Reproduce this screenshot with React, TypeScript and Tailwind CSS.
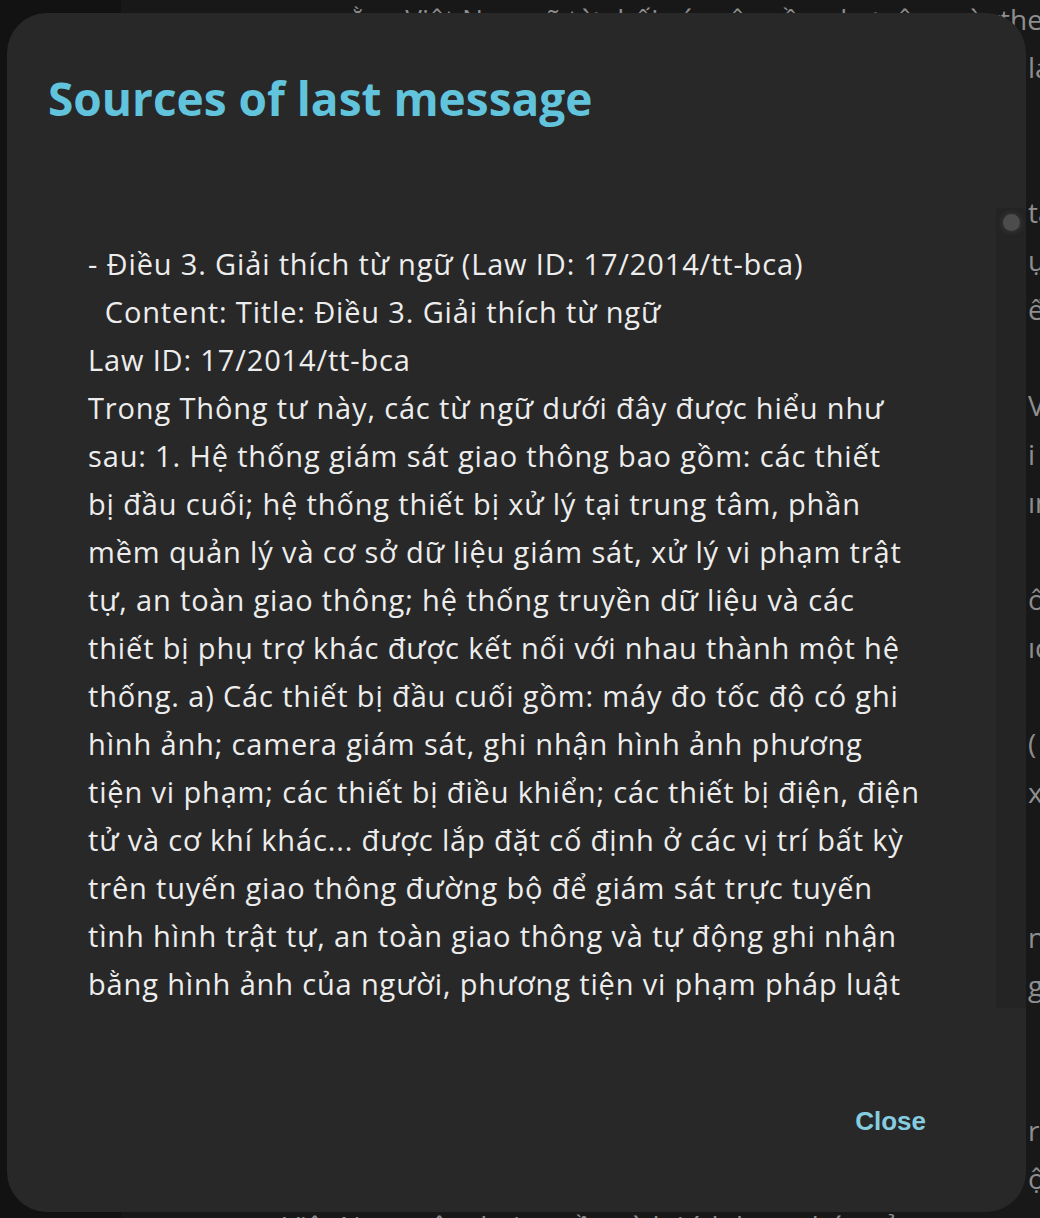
import React from "react";

const bodyLines = [
  "- Điều 3. Giải thích từ ngữ (Law ID: 17/2014/tt-bca)",
  "  Content: Title: Điều 3. Giải thích từ ngữ",
  "Law ID: 17/2014/tt-bca",
  "Trong Thông tư này, các từ ngữ dưới đây được hiểu như",
  "sau: 1. Hệ thống giám sát giao thông bao gồm: các thiết",
  "bị đầu cuối; hệ thống thiết bị xử lý tại trung tâm, phần",
  "mềm quản lý và cơ sở dữ liệu giám sát, xử lý vi phạm trật",
  "tự, an toàn giao thông; hệ thống truyền dữ liệu và các",
  "thiết bị phụ trợ khác được kết nối với nhau thành một hệ",
  "thống. a) Các thiết bị đầu cuối gồm: máy đo tốc độ có ghi",
  "hình ảnh; camera giám sát, ghi nhận hình ảnh phương",
  "tiện vi phạm; các thiết bị điều khiển; các thiết bị điện, điện",
  "tử và cơ khí khác... được lắp đặt cố định ở các vị trí bất kỳ",
  "trên tuyến giao thông đường bộ để giám sát trực tuyến",
  "tình hình trật tự, an toàn giao thông và tự động ghi nhận",
  "bằng hình ảnh của người, phương tiện vi phạm pháp luật",
];

// fragments of the page behind the dialog, one per row
const pageRows = [
  "lạ", "", "", "tăng", "ục", "ến", "", "Việt", "i c", "ın", "", "ông",
  "ıc", "", "(", "x", "", "", "n", "g", "", "", "r", "ộ",
];

function BackgroundPage() {
  return (
    <div className="flex h-full w-full">
      <div className="w-[121px] shrink-0 bg-[#121212]" />
      <div className="flex-1 overflow-hidden bg-[#181818] text-[28px] leading-[48.3px] text-[#8e8e8e] [font-family:'Open_Sans',sans-serif]">
        <div className="-mt-[5px]">
          <div className="flex h-[48.3px] whitespace-nowrap">
            <span className="w-[879px] shrink-0 overflow-hidden pl-[229px]">
              ằng Việt Nam sẽ từ chối các yêu cầu như vậy, mà ngữ cảnh thì thế
            </span>
            <span>the</span>
          </div>
          {pageRows.map((t, i) => (
            <div key={i} className="h-[48.3px] whitespace-nowrap pl-[907px]">
              {t}
            </div>
          ))}
          <div className="h-[48.3px] whitespace-nowrap pl-[162px]">
            Việt Nam, xâm hại quyền và lợi ích hợp pháp của cơ quan, tổ chức
          </div>
        </div>
      </div>
    </div>
  );
}

function SourcesDialog() {
  return (
    <div className="absolute left-[7px] top-[13px] flex h-[1199px] w-[1019px] flex-col overflow-hidden rounded-[40px] bg-[#282828]">
      <h2 className="pl-[41px] pt-[62px] text-[46px] font-bold leading-none text-[#62c3dc] [font-family:'Open_Sans',sans-serif]">
        Sources of last message
      </h2>

      <div className="mt-[87px] flex h-[800px]">
        <div className="flex-1 overflow-hidden pl-[81px] pt-[32px] text-[29px] leading-[48px] tracking-[0.85px] text-[#ededed] [font-family:'Open_Sans',sans-serif]">
          {bodyLines.map((line, i) => (
            <div key={i} className="whitespace-pre">
              {line}
            </div>
          ))}
        </div>
        <div className="relative w-[30px] shrink-0 bg-[#242424]">
          <div className="absolute left-[7px] top-[6px] h-[17px] w-[17px] rounded-full bg-[#4c4c4c] shadow-[0_0_5px_2px_rgba(80,80,80,0.35)]" />
        </div>
      </div>

      <div className="flex flex-1 items-start justify-end pr-[100px] pt-[100px]">
        <button className="text-[26px] font-bold leading-none text-[#86cde0] [font-family:'Liberation_Sans',Arial,sans-serif]">
          Close
        </button>
      </div>
    </div>
  );
}

export default function App() {
  return (
    <div className="relative h-[1218px] w-[1040px] overflow-hidden bg-[#121212]">
      <BackgroundPage />
      <SourcesDialog />
    </div>
  );
}
